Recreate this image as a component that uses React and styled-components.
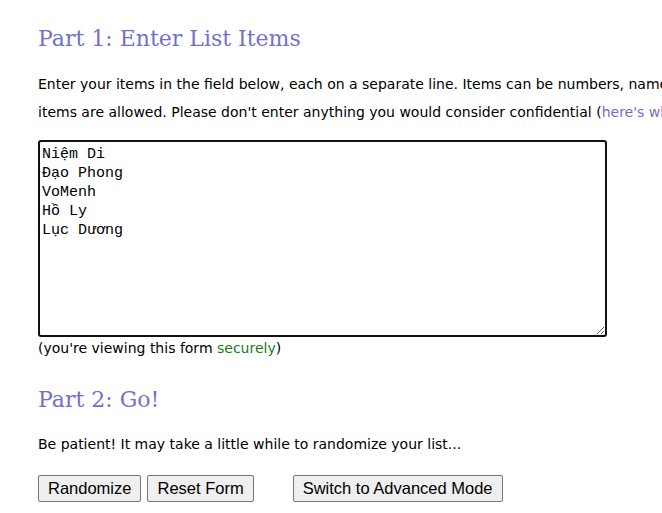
import React from 'react'
import styled, { createGlobalStyle } from 'styled-components'

const items = ['Niệm Di', 'Đạo Phong', 'VoMenh', 'Hồ Ly', 'Lục Dương'].join('\n')

function App() {
  return (
    <Page>
      <GlobalStyle />
      <Heading>Part 1: Enter List Items</Heading>
      <Intro>
        <Line>
          Enter your items in the field below, each on a separate line. Items can be numbers, names, email
          addresses, etc. A maximum of 10,000
        </Line>
        <Line>
          items are allowed. Please don't enter anything you would consider confidential (
          <Link href="#">here's why</Link>).
        </Line>
      </Intro>
      <ListField defaultValue={items} spellCheck={false} />
      <Note>
        (you're viewing this form <Secure href="#">securely</Secure>)
      </Note>
      <Heading $gap>Part 2: Go!</Heading>
      <Text>Be patient! It may take a little while to randomize your list...</Text>
      <Buttons>
        <Button>Randomize</Button>
        <Button>Reset Form</Button>
        <Button $spaced>Switch to Advanced Mode</Button>
      </Buttons>
    </Page>
  )
}

export default App

const GlobalStyle = createGlobalStyle`
  body {
    margin: 0;
    background: #fff;
    color: #000;
    overflow: hidden;
  }
`

const Page = styled.div`
  padding: 20px 0 0 38px;
  font-family: Tahoma, "DejaVu Sans", sans-serif;
  font-size: 14px;
`

const Heading = styled.h2`
  margin: ${p => (p.$gap ? '22px' : '0')} 0 0;
  font-family: Georgia, "DejaVu Serif", serif;
  font-weight: normal;
  font-size: 22px;
  line-height: 38px;
  color: #7272c9;
`

const Intro = styled.div`
  margin-top: 12px;
  width: 624px;
  overflow: hidden;
`

const Line = styled.div`
  white-space: nowrap;
  line-height: 28px;
`

const Link = styled.a`
  color: #7070cc;
  text-decoration: none;
`

const ListField = styled.textarea`
  display: block;
  box-sizing: border-box;
  margin-top: 14px;
  width: 569px;
  height: 197px;
  padding: 3px 2px;
  border: 2px solid #111;
  border-radius: 3px;
  font-family: Consolas, "Liberation Mono", monospace;
  font-size: 15px;
  line-height: 19px;
  color: #000;
  resize: both;
  outline: none;
`

const Note = styled.div`
  line-height: 22px;
`

const Secure = styled.a`
  color: #1b7a1b;
  text-decoration: none;
`

const Text = styled.p`
  margin: 11px 0 0;
  line-height: 28px;
`

const Buttons = styled.div`
  display: flex;
  margin-top: 17px;
  gap: 6px;
`

const Button = styled.button`
  margin-left: ${p => (p.$spaced ? '33px' : '0')};
  height: 27px;
  padding: 0 9px;
  font-family: Arial, "Liberation Sans", sans-serif;
  font-size: 16.5px;
  color: #000;
  background: #efefef;
  border: 1px solid #767676;
  border-radius: 2px;
`
